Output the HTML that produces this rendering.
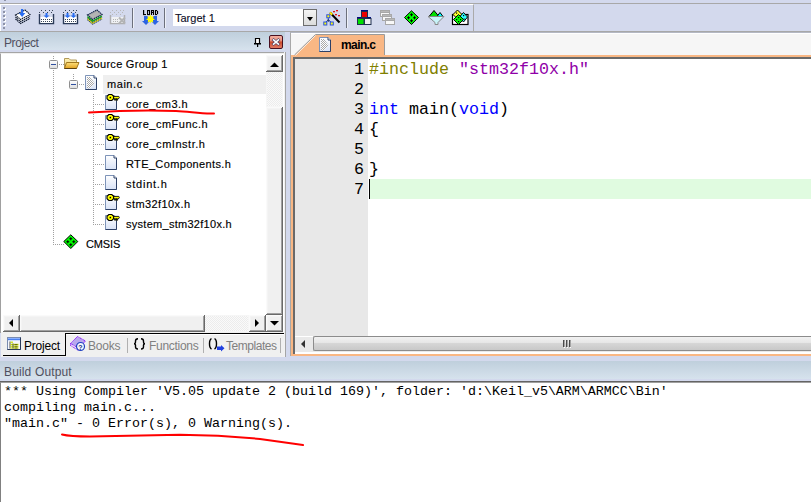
<!DOCTYPE html>
<html><head><meta charset="utf-8">
<style>
*{margin:0;padding:0;box-sizing:border-box}
html,body{width:811px;height:502px;overflow:hidden;background:#d3d9ed;font-family:"Liberation Sans",sans-serif}
body{position:relative}
.a{position:absolute}
.ui{font-family:"Liberation Sans",sans-serif;font-size:11px;white-space:nowrap;color:#000;line-height:13px}
.btn{background:#f0f0f0;box-shadow:inset -1px -1px #696969,inset 1px 1px #fafafa,inset -2px -2px #a0a0a0,inset 2px 2px #f4f4f4}
.mono{font-family:"Liberation Mono",monospace;white-space:pre}
.tr{position:absolute;margin-top:1px;-webkit-text-stroke:0.15px #000;font-family:"Liberation Sans",sans-serif;font-size:11px;letter-spacing:0.25px;white-space:nowrap;color:#000;line-height:13px}
.ln{position:absolute;left:295px;width:69px;text-align:right;font-family:"Liberation Mono",monospace;font-size:16.67px;line-height:20px;color:#000}
.cd{position:absolute;left:369px;font-family:"Liberation Mono",monospace;font-size:16.67px;line-height:20px;white-space:pre;color:#000}
.out{position:absolute;left:4px;font-family:"Liberation Mono",monospace;font-size:13.33px;line-height:16px;white-space:pre;color:#000}
</style></head><body>

<!-- ===== top strip + toolbar ===== -->
<div class="a" style="left:0;top:3px;width:811px;height:1px;background:#a8a8a8"></div>
<div class="a" style="left:0;top:4px;width:474px;height:27px;background:#d3d9ed;border-top:1px solid #fff;border-left:1px solid #fff;border-right:1px solid #aaa"></div>
<div class="a" style="left:0;top:31px;width:811px;height:1px;background:#a8a8a8"></div>
<!-- combo -->
<div class="a" style="left:173px;top:9px;width:131px;height:17px;background:#fff"></div>
<div class="a ui" style="left:175px;top:12px;font-size:11px;line-height:13px;color:#101030;-webkit-text-stroke:0.12px #000">Target 1</div>
<div class="a" style="left:303px;top:9px;width:14px;height:17px;border:1px solid #6e6e6e;background:linear-gradient(#f4f4f4,#dcdcdc)"></div>

<!-- ===== PROJECT PANEL ===== -->
<div class="a" style="left:0;top:32px;width:285px;height:18px;background:linear-gradient(#bfcfdc,#d6e2ed)"></div>
<div class="a ui" style="left:4px;top:36px;font-size:12px;line-height:14px;color:#50505e;letter-spacing:-0.4px">Project</div>
<svg class="a" style="left:250px;top:32px" width="36" height="20">
  <path d="M5.5,6.5 H9.5 V11.5 H5.5 Z" fill="#fff" stroke="#000" stroke-width="1.2"/>
  <rect x="4" y="11" width="7" height="1.5" fill="#000"/>
  <rect x="7" y="12" width="1.2" height="3" fill="#000"/>
</svg>
<div class="a" style="left:269px;top:35px;width:14px;height:14px;border:1px solid #4a1020;border-radius:2px;background:linear-gradient(#f4b0a0 0%,#e89080 40%,#cc4a2c 50%,#e07a64 100%)"></div>
<svg class="a" style="left:269px;top:35px" width="14" height="14">
  <path d="M3.6,4.1 L10.4,9.9 M10.4,4.1 L3.6,9.9" stroke="#4a4060" stroke-width="2.8" stroke-linecap="butt"/>
  <path d="M4,4.4 L10,9.6 M10,4.4 L4,9.6" stroke="#fff" stroke-width="1.6" stroke-linecap="butt"/>
</svg>
<div class="a" style="left:0;top:52px;width:286px;height:1px;background:#a5a5a5"></div>
<div class="a" style="left:0;top:53px;width:284px;height:280px;background:#fff;border-left:1px solid #a0a0a0;border-top:1px solid #f0f0f0"></div>
<div class="a" style="left:284px;top:52px;width:2px;height:305px;background:#f2f2f2;border-right:1px solid #a5a5a5"></div>

<!-- highlight main.c -->
<div class="a" style="left:103px;top:75px;width:163px;height:19px;background:#efefef"></div>

<!-- tree text -->
<div class="tr" style="left:86px;top:57px;letter-spacing:0.28px">Source Group 1</div>
<div class="tr" style="left:107px;top:77px;letter-spacing:0.55px">main.c</div>
<div class="tr" style="left:126px;top:97px;letter-spacing:0.47px">core_cm3.h</div>
<div class="tr" style="left:126px;top:117px;letter-spacing:0.49px">core_cmFunc.h</div>
<div class="tr" style="left:126px;top:137px;letter-spacing:0.52px">core_cmInstr.h</div>
<div class="tr" style="left:126px;top:157px;letter-spacing:0.36px">RTE_Components.h</div>
<div class="tr" style="left:126px;top:177px;letter-spacing:0.76px">stdint.h</div>
<div class="tr" style="left:126px;top:197px;letter-spacing:0.42px">stm32f10x.h</div>
<div class="tr" style="left:126px;top:217px;letter-spacing:0.28px">system_stm32f10x.h</div>
<div class="tr" style="left:86px;top:237px;letter-spacing:-0.12px">CMSIS</div>

<!-- tree v-scrollbar -->
<div class="a" style="left:266px;top:55px;width:17px;height:260px;background:#f6f6f6"></div>
<div class="a btn" style="left:266px;top:55px;width:17px;height:17px"></div>
<div class="a btn" style="left:266px;top:107px;width:17px;height:208px"></div>
<!-- tree h-scrollbar -->
<div class="a" style="left:3px;top:315px;width:263px;height:17px;background:#f6f6f6"></div>
<div class="a btn" style="left:3px;top:315px;width:17px;height:17px"></div>
<div class="a btn" style="left:20px;top:315px;width:185px;height:17px"></div>
<div class="a btn" style="left:249px;top:315px;width:17px;height:17px"></div>
<div class="a btn" style="left:266px;top:315px;width:17px;height:17px"></div>

<!-- tabs strip -->
<div class="a" style="left:1px;top:332px;width:283px;height:25px;background:#f0f0f0"></div>
<div class="a" style="left:65px;top:333px;width:219px;height:1px;background:#000"></div>
<div class="a" style="left:66px;top:334px;width:218px;height:1px;background:#fff"></div>
<div class="a" style="left:65px;top:333px;width:1px;height:23px;background:#000"></div>
<div class="a" style="left:3px;top:355px;width:63px;height:1px;background:#000"></div>
<div class="a ui" style="left:24px;top:339px;font-size:12px;line-height:14px;letter-spacing:-0.2px;color:#000">Project</div>
<div class="a ui" style="left:88px;top:339px;font-size:12px;line-height:14px;letter-spacing:-0.2px;color:#808080">Books</div>
<div class="a" style="left:127px;top:338px;width:1px;height:15px;background:#b0b0b0"></div>
<div class="a ui" style="left:149px;top:339px;font-size:12px;line-height:14px;letter-spacing:-0.3px;color:#808080">Functions</div>
<div class="a" style="left:203px;top:338px;width:1px;height:15px;background:#b0b0b0"></div>
<div class="a ui" style="left:226px;top:339px;font-size:12px;line-height:14px;letter-spacing:-0.45px;color:#808080">Templates</div>
<div class="a" style="left:280px;top:338px;width:1px;height:15px;background:#b0b0b0"></div>

<!-- ===== EDITOR ===== -->
<div class="a" style="left:290px;top:32px;width:521px;height:324px;background:#f6f6f6;border-left:1px solid #a8a8a8;border-top:1px solid #b4b8c4"></div>
<div class="a" style="left:291px;top:33px;width:520px;height:1px;background:#fff"></div>
<!-- editor frame orange -->
<div class="a" style="left:291px;top:55px;width:520px;height:301px;background:#f9b784"></div>
<div class="a" style="left:293px;top:57px;width:518px;height:297px;background:#fff;border-top:2px solid #6a6a6a;border-left:2px solid #6a6a6a"></div>
<!-- gutter -->
<div class="a" style="left:295px;top:59px;width:73px;height:277px;background:#e8e8e8"></div>
<!-- current line -->
<div class="a" style="left:369px;top:179px;width:442px;height:20px;background:#e0fbe0"></div>
<div class="a" style="left:369px;top:179px;width:1px;height:20px;background:#000"></div>
<!-- tab -->
<svg class="a" style="left:290px;top:32px" width="110" height="26">
  <polygon points="4.5,23.5 25,3 94,3 94,23.5" fill="#f9b784"/>
  <polyline points="4.5,23 25.5,2.5 94.5,2.5 94.5,23" fill="none" stroke="#9a9a9a" stroke-width="1"/>
  <polyline points="5.5,23.5 25.5,3.5" fill="none" stroke="#fff" stroke-width="1" opacity="0.7"/>
</svg>
<div class="a ui" style="left:341px;top:38px;font-size:12px;line-height:14px;font-weight:bold;color:#000;letter-spacing:-0.6px">main.c</div>

<!-- line numbers -->
<div class="ln" style="top:60px">1</div>
<div class="ln" style="top:80px">2</div>
<div class="ln" style="top:100px">3</div>
<div class="ln" style="top:120px">4</div>
<div class="ln" style="top:140px">5</div>
<div class="ln" style="top:160px">6</div>
<div class="ln" style="top:180px">7</div>
<!-- code -->
<div class="cd" style="top:60px"><span style="color:#808000">#include</span> <span style="color:#9000a8">"stm32f10x.h"</span></div>
<div class="cd" style="top:100px"><span style="color:#0000ff">int</span> main(<span style="color:#0000ff">void</span>)</div>
<div class="cd" style="top:120px">{</div>
<div class="cd" style="top:160px">}</div>

<!-- editor h-scrollbar -->
<div class="a" style="left:295px;top:336px;width:516px;height:16px;background:#e9e9e9;border-top:1px solid #fff"></div>
<div class="a" style="left:313px;top:336px;width:498px;height:15px;border:1px solid #8c8c8c;border-right:none;border-radius:2px 0 0 2px;background:linear-gradient(#f2f2f2 0%,#e6e6e6 45%,#d6d6d6 50%,#c8c8c8 100%)"></div>

<!-- ===== BUILD OUTPUT ===== -->
<div class="a" style="left:0;top:361px;width:811px;height:18px;background:linear-gradient(#bfcfdc,#d6e2ed)"></div>
<div class="a ui" style="left:4px;top:365px;font-size:12px;line-height:14px;color:#50505e;letter-spacing:0.15px">Build Output</div>
<div class="a" style="left:0;top:381px;width:811px;height:1px;background:#646464"></div>
<div class="a" style="left:0;top:382px;width:811px;height:120px;background:#fff;border-left:1px solid #808080;border-top:1px solid #a0a0a0"></div>
<div class="out" style="top:384px">*** Using Compiler 'V5.05 update 2 (build 169)', folder: 'd:\Keil_v5\ARM\ARMCC\Bin'</div>
<div class="out" style="top:400px">compiling main.c...</div>
<div class="out" style="top:416px">"main.c" - 0 Error(s), 0 Warning(s).</div>

<!-- ===== SVG overlay ===== -->
<svg class="a" style="left:0;top:0" width="811" height="502" shape-rendering="auto">
<defs>
  <linearGradient id="docg" x1="0" y1="0" x2="0" y2="1"><stop offset="0" stop-color="#ffffff"/><stop offset="1" stop-color="#d8e2f6"/></linearGradient>
  <linearGradient id="boxg" x1="0" y1="0" x2="0" y2="1"><stop offset="0" stop-color="#ffffff"/><stop offset="1" stop-color="#dcdcdc"/></linearGradient>
  <linearGradient id="fold1" x1="0" y1="0" x2="0" y2="1"><stop offset="0" stop-color="#fff3b8"/><stop offset="1" stop-color="#e9c460"/></linearGradient>
  <linearGradient id="fold2" x1="0" y1="0" x2="0" y2="1"><stop offset="0" stop-color="#ffe07a"/><stop offset="1" stop-color="#e0a020"/></linearGradient>
  <pattern id="dith" width="2" height="2" patternUnits="userSpaceOnUse"><rect width="2" height="2" fill="#fff"/><rect width="1" height="1" fill="#a8a8a8"/><rect x="1" y="1" width="1" height="1" fill="#a8a8a8"/></pattern>
  <pattern id="trk" width="2" height="2" patternUnits="userSpaceOnUse"><rect width="2" height="2" fill="#fafafa"/><rect width="1" height="1" fill="#ececec"/><rect x="1" y="1" width="1" height="1" fill="#ececec"/></pattern>
  <g id="doc">
    <path d="M0.5,0.5 H9 L11.5,3 V14.5 H0.5 Z" fill="url(#docg)" stroke="#7d93b8" stroke-width="1"/>
    <path d="M11.5,3 V14.5 H0.5" fill="none" stroke="#2d4066" stroke-width="1"/>
    <path d="M9,0.5 V3 H11.5" fill="#fff" stroke="#2d4066" stroke-width="1"/>
  </g>
  <g id="key">
    <path d="M7.3,2.2 H12.8 L13.3,3.2 L12.8,4.4 H11.6 V6 H10.6 V4.4 H9.6 V6 H8.6 V4.4 H7.3 Z" fill="#ffff00" stroke="#000" stroke-width="0.9" stroke-linejoin="round"/>
    <path d="M2.8,0.3 H5.8 L7.6,2.1 V4.5 L5.8,6.3 H2.8 L1,4.5 V2.1 Z" fill="#ffff00" stroke="#000" stroke-width="1.1"/>
    <rect x="3.6" y="2.6" width="1.5" height="1.5" fill="#000"/>
  </g>
  <g id="minus">
    <rect x="0.5" y="0.5" width="8" height="8" rx="1" fill="url(#boxg)" stroke="#8f8f8f"/>
    <rect x="2" y="4" width="5" height="1" fill="#3050a0"/>
  </g>
  <g id="gdiam">
    <path d="M7,0.3 L14,7 L7,14 L0,7 Z" fill="#00ff00" stroke="#000" stroke-width="1"/>
    <path d="M6.5,2.8 H7.5 V3.8 H8.5 V4.8 H7.5 V5.8 H6.5 V4.8 H5.5 V3.8 H6.5 Z M3.5,5.8 H4.5 V6.8 H5.5 V7.8 H4.5 V8.8 H3.5 V7.8 H2.5 V6.8 H3.5 Z M9.5,5.8 H10.5 V6.8 H11.5 V7.8 H10.5 V8.8 H9.5 V7.8 H8.5 V6.8 H9.5 Z M6.5,8.8 H7.5 V9.8 H8.5 V10.8 H7.5 V11.8 H6.5 V10.8 H5.5 V9.8 H6.5 Z" fill="#000"/>
  </g>
</defs>
<!-- tree dotted lines -->
<g stroke="#a0a0a0" stroke-width="1" stroke-dasharray="1,1" fill="none">
  <line x1="53.5" y1="56" x2="53.5" y2="59"/>
  <line x1="53.5" y1="70" x2="53.5" y2="245"/>
  <line x1="59" y1="64.5" x2="64" y2="64.5"/>
  <line x1="73.5" y1="74" x2="73.5" y2="79"/>
  <line x1="79" y1="84.5" x2="85" y2="84.5"/>
  <line x1="93.5" y1="94" x2="93.5" y2="225"/>
  <line x1="95" y1="104.5" x2="105" y2="104.5"/>
  <line x1="95" y1="124.5" x2="105" y2="124.5"/>
  <line x1="95" y1="144.5" x2="105" y2="144.5"/>
  <line x1="95" y1="164.5" x2="105" y2="164.5"/>
  <line x1="95" y1="184.5" x2="105" y2="184.5"/>
  <line x1="95" y1="204.5" x2="105" y2="204.5"/>
  <line x1="95" y1="224.5" x2="105" y2="224.5"/>
  <line x1="55" y1="244.5" x2="64" y2="244.5"/>
</g>
<use href="#minus" x="49" y="60"/>
<use href="#minus" x="69" y="80"/>
<!-- folder -->
<g transform="translate(64,57)">
  <path d="M0.5,1.5 H5 L6.5,3 H12.5 V11.5 H0.5 Z" fill="url(#fold1)" stroke="#b29a5a" stroke-width="1"/>
  <path d="M2.5,5.5 H15 L12.5,11.5 H0.5 Z" fill="url(#fold2)" stroke="#a07820" stroke-width="1"/>
  <path d="M0.5,11.5 H12.5" stroke="#5a4010" stroke-width="1"/>
</g>
<!-- main.c doc -->
<g transform="translate(85,75)">
  <use href="#doc"/>
  <path d="M2,2 H5 L9.5,8 L5,13.5 H2 Z" fill="url(#dith)"/>
</g>
<!-- child docs -->
<use href="#doc" x="105" y="95"/><use href="#key" x="106" y="94.2"/>
<use href="#doc" x="105" y="115"/><use href="#key" x="106" y="114.2"/>
<use href="#doc" x="105" y="135"/><use href="#key" x="106" y="134.2"/>
<use href="#doc" x="105" y="155"/>
<use href="#doc" x="105" y="175"/>
<use href="#doc" x="105" y="195"/><use href="#key" x="106" y="194.2"/>
<use href="#doc" x="105" y="215"/><use href="#key" x="106" y="214.2"/>
<use href="#gdiam" x="63.8" y="234.5"/>

<!-- scrollbar arrows (tree) -->
<path d="M270,67 L274.5,62.5 L279,67 Z" fill="#000"/>
<path d="M13,319 L9,323 L13,327 Z" fill="#000"/>
<path d="M255,319 L259,323 L255,327 Z" fill="#000"/>
<path d="M270,321 L274.5,325.5 L279,321 Z" fill="#000"/>
<rect x="267" y="72" width="15" height="34" fill="url(#trk)"/>
<rect x="205" y="316" width="43" height="15" fill="url(#trk)"/>

<!-- editor tab doc icon -->
<g transform="translate(319,37)">
  <use href="#doc"/>
  <path d="M2,2 H5 L9.5,8 L5,13.5 H2 Z" fill="url(#dith)"/>
</g>
<!-- editor h-scroll left arrow + grip -->
<path d="M305,340 L301,344 L305,348 Z" fill="#333"/>
<g fill="#fff"><rect x="564" y="341" width="1" height="7"/><rect x="567" y="341" width="1" height="7"/><rect x="570" y="341" width="1" height="7"/></g><g fill="#4a4a4a"><rect x="563" y="340" width="1.5" height="7"/><rect x="566" y="340" width="1.5" height="7"/><rect x="569" y="340" width="1.5" height="7"/></g>

<!-- combo arrow -->
<path d="M307,17 L313,17 L310,21 Z" fill="#000"/>

<!-- ===== toolbar icons ===== -->
<!-- grip dots -->
<g fill="#fff"><rect x="4" y="8" width="2" height="2"/><rect x="4" y="12" width="2" height="2"/><rect x="4" y="16" width="2" height="2"/><rect x="4" y="20" width="2" height="2"/><rect x="4" y="24" width="2" height="2"/><rect x="4" y="28" width="1" height="1"/></g>
<g fill="#8c92a8"><rect x="3" y="7" width="2" height="2"/><rect x="3" y="11" width="2" height="2"/><rect x="3" y="15" width="2" height="2"/><rect x="3" y="19" width="2" height="2"/><rect x="3" y="23" width="2" height="2"/><rect x="3" y="27" width="2" height="2"/><rect x="4" y="0" width="2" height="1"/></g>
<!-- icon1: stack + arrow -->
<g transform="translate(15,9)" stroke="#0a1428" stroke-width="1.1" stroke-dasharray="1.5,0.6">
  <path d="M0.5,10 L5.5,14.5 L15,9.5" fill="none"/>
  <path d="M0.5,8 L5.5,12.5 L15,7.5" fill="#fff"/>
  <path d="M0.5,6 L10,1 L15,5.5 L5.5,10.5 Z" fill="#fff"/>
</g>
<g transform="translate(15,9)">
  <rect x="6" y="0" width="2.2" height="4.5" fill="#2a6ef0"/>
  <path d="M3.8,4 L10.4,4 L7.1,8 Z" fill="#2a6ef0"/>
</g>
<!-- icon2: build -->
<g transform="translate(39,9)">
  <g fill="#3a4658"><rect x="2" y="1" width="1" height="1"/><rect x="6" y="1" width="1" height="1"/><rect x="10" y="1" width="1" height="1"/><rect x="13" y="1" width="1" height="1"/><rect x="0" y="3" width="1" height="1"/><rect x="4" y="3" width="1" height="1"/><rect x="8" y="3" width="1" height="1"/><rect x="12" y="3" width="1" height="1"/></g>
  <path d="M0.5,5 V14.5 H14.5 V5" fill="none" stroke="#2a3a58" stroke-width="1.4"/>
  <rect x="1.5" y="8" width="12" height="6" fill="#fff"/>
  <g fill="#3a4658"><rect x="2" y="10" width="1" height="1"/><rect x="4" y="10" width="1" height="1"/><rect x="6" y="10" width="1" height="1"/><rect x="8" y="10" width="1" height="1"/><rect x="10" y="10" width="1" height="1"/><rect x="12" y="10" width="1" height="1"/><rect x="2" y="12" width="1" height="1"/><rect x="4" y="12" width="1" height="1"/><rect x="6" y="12" width="1" height="1"/><rect x="8" y="12" width="1" height="1"/><rect x="10" y="12" width="1" height="1"/><rect x="12" y="12" width="1" height="1"/></g>
  <rect x="6.5" y="4" width="2" height="3" fill="#2a6ef0"/><path d="M4.5,6.5 L10.5,6.5 L7.5,9 Z" fill="#2a6ef0"/>
</g>
<!-- icon3: rebuild -->
<g transform="translate(63,9)">
  <g fill="#3a4658"><rect x="2" y="1" width="1" height="1"/><rect x="6" y="1" width="1" height="1"/><rect x="10" y="1" width="1" height="1"/><rect x="13" y="1" width="1" height="1"/><rect x="0" y="3" width="1" height="1"/><rect x="4" y="3" width="1" height="1"/><rect x="8" y="3" width="1" height="1"/><rect x="12" y="3" width="1" height="1"/></g>
  <path d="M0.5,5 V14.5 H14.5 V5" fill="none" stroke="#2a3a58" stroke-width="1.4"/>
  <rect x="1.5" y="8" width="12" height="6" fill="#fff"/>
  <g fill="#3a4658"><rect x="2" y="10" width="1" height="1"/><rect x="4" y="10" width="1" height="1"/><rect x="6" y="10" width="1" height="1"/><rect x="8" y="10" width="1" height="1"/><rect x="10" y="10" width="1" height="1"/><rect x="12" y="10" width="1" height="1"/><rect x="2" y="12" width="1" height="1"/><rect x="4" y="12" width="1" height="1"/><rect x="6" y="12" width="1" height="1"/><rect x="8" y="12" width="1" height="1"/><rect x="10" y="12" width="1" height="1"/><rect x="12" y="12" width="1" height="1"/></g>
  <rect x="3.5" y="4" width="2" height="3" fill="#2a6ef0"/><path d="M1.5,6.5 L7.5,6.5 L4.5,9 Z" fill="#2a6ef0"/>
  <rect x="9.5" y="4" width="2" height="3" fill="#2a6ef0"/><path d="M7.5,6.5 L13.5,6.5 L10.5,9 Z" fill="#2a6ef0"/>
</g>
<!-- icon4: batch -->
<g transform="translate(87,9)" stroke-width="1.2">
  <path d="M0.5,10.5 L5.5,15 L15,10" fill="none" stroke="#1a2a50" stroke-dasharray="1.5,0.6"/>
  <path d="M0.5,9.5 L5.5,14 L15,9" fill="none" stroke="#e8e800"/>
  <path d="M0.5,8.5 L5.5,13 L15,8" fill="none" stroke="#1a2a50" stroke-dasharray="1.5,0.6"/>
  <path d="M0.5,7.5 L5.5,12 L15,7" fill="none" stroke="#10b010"/>
  <path d="M0.5,6 L10,1 L15,5.5 L5.5,10.5 Z" fill="#b4b4b4" stroke="#1a2a50" stroke-dasharray="1.5,0.6"/>
</g>
<!-- icon5: stop build disabled -->
<g transform="translate(110,9)" opacity="0.9">
  <g fill="#b4b4b4"><rect x="2" y="1" width="1" height="1"/><rect x="6" y="1" width="1" height="1"/><rect x="10" y="1" width="1" height="1"/><rect x="13" y="1" width="1" height="1"/><rect x="0" y="3" width="1" height="1"/><rect x="4" y="3" width="1" height="1"/><rect x="8" y="3" width="1" height="1"/><rect x="12" y="3" width="1" height="1"/><rect x="2" y="5" width="1" height="1"/><rect x="6" y="5" width="1" height="1"/><rect x="10" y="5" width="1" height="1"/></g>
  <path d="M0.5,6 V14.5 H14.5 V6" fill="none" stroke="#aaa" stroke-width="1.4"/>
  <rect x="1.5" y="8" width="12" height="6" fill="#f4f4f4"/>
  <g fill="#b0b0b0"><rect x="3" y="10" width="1" height="1"/><rect x="5" y="10" width="1" height="1"/><rect x="7" y="10" width="1" height="1"/><rect x="3" y="12" width="1" height="1"/><rect x="5" y="12" width="1" height="1"/><rect x="7" y="12" width="1" height="1"/></g>
  <path d="M9,8.5 L15,14.5 M15,8.5 L9,14.5" stroke="#b0b0b0" stroke-width="2"/>
</g>
<!-- separators -->
<rect x="132" y="8" width="1" height="20" fill="#6c707c"/><rect x="133" y="8" width="1" height="20" fill="#fff" opacity="0.6"/>
<rect x="164" y="8" width="1" height="20" fill="#6c707c"/><rect x="165" y="8" width="1" height="20" fill="#fff" opacity="0.6"/>
<rect x="346" y="8" width="1" height="20" fill="#6c707c"/><rect x="347" y="8" width="1" height="20" fill="#fff" opacity="0.6"/>
<!-- LOAD -->
<g fill="#000">
  <rect x="143" y="10" width="1.2" height="5"/><rect x="143" y="14" width="3" height="1.1"/>
  <rect x="147" y="10" width="3" height="1.1"/><rect x="147" y="14" width="3" height="1.1"/><rect x="147" y="10" width="1.1" height="5"/><rect x="149" y="10" width="1.1" height="5"/>
  <rect x="151" y="10" width="3" height="1.1"/><rect x="151" y="10" width="1.1" height="5"/><rect x="153" y="10" width="1.1" height="5"/><rect x="151" y="12" width="3" height="1"/>
  <rect x="155" y="10" width="2.2" height="1.1"/><rect x="155" y="14" width="2.2" height="1.1"/><rect x="155" y="10" width="1.1" height="5"/><rect x="157" y="11" width="1.1" height="3"/>
</g>
<path d="M144,16 H148 V21 H150 L146,25 L142,21 H144 Z" fill="#2c64e4"/>
<path d="M153,16 H157 V21 H159 L155,25 L151,21 H153 Z" fill="#2c64e4"/>
<path d="M150.5,14.5 L151.5,16.8 L153.8,16 L153,18.3 L155,19.5 L152.8,20.3 L153.3,22.6 L151.2,21.4 L150.5,23.5 L149.8,21.4 L147.7,22.6 L148.2,20.3 L146,19.5 L148,18.3 L147.2,16 L149.5,16.8 Z" fill="#ffff00"/>
<!-- wizard -->
<path d="M330,12.5 L339.5,22.5" stroke="#000" stroke-width="2"/>
<path d="M330,12.5 L332.2,14.8" stroke="#ffe800" stroke-width="2"/>
<g fill="#e01818"><rect x="333" y="11" width="2" height="1.3"/><rect x="336" y="10" width="2" height="1.3"/><rect x="335" y="14" width="2" height="1.3"/><rect x="338" y="15" width="2" height="1.3"/></g>
<path d="M328.3,17.5 V20 L325.3,22.5 M328.3,20 L331.6,22.5" stroke="#2a50c0" stroke-width="1" fill="none"/>
<rect x="326.8" y="14.8" width="3" height="3" fill="#ff0" stroke="#2a50e0" stroke-width="1"/>
<rect x="323.8" y="22" width="3" height="3" fill="#ff0" stroke="#2a50e0" stroke-width="1"/>
<rect x="330.3" y="22" width="3" height="3" fill="#ff0" stroke="#2a50e0" stroke-width="1"/>
<path d="M328.3,19 L329.8,20.5 L328.3,22 L326.8,20.5 Z" fill="#304070"/>
<!-- icon A: blocks -->
<g transform="translate(357,10)">
  <rect x="4" y="0" width="7" height="1.5" fill="#000a80"/>
  <rect x="4.5" y="1.5" width="6" height="6" fill="#ee0000" stroke="#203050"/>
  <rect x="0" y="7" width="4" height="1.5" fill="#000a80"/><rect x="10" y="7" width="4" height="1.5" fill="#000a80"/>
  <rect x="0.5" y="8.5" width="6.5" height="6" fill="#00e000" stroke="#203050"/>
  <rect x="7.5" y="8.5" width="6.5" height="6" fill="#f0f0f0" stroke="#203050"/>
</g>
<!-- icon B: windows -->
<g transform="translate(380,10)" fill="#f8f8f8" stroke="#a8a8a8">
  <rect x="0.5" y="0.5" width="9" height="6"/><rect x="0.5" y="0.5" width="9" height="2" fill="#b8b8b8"/>
  <rect x="2.5" y="4.5" width="9" height="6"/><rect x="2.5" y="4.5" width="9" height="2" fill="#b8b8b8"/>
  <rect x="5.5" y="8.5" width="9" height="6"/><rect x="5.5" y="8.5" width="9" height="2" fill="#b8b8b8"/>
</g>
<!-- icon C -->
<use href="#gdiam" x="404.5" y="10.5"/>
<!-- icon D funnel -->
<g transform="translate(428,10)">
  <path d="M1,6.5 L6,0.5 L11,6.5 Z" fill="#00e000" stroke="#000"/>
  <path d="M9,6.5 L12,2.5 L15,6.5 Z" fill="#00ffff" stroke="#000"/>
  <path d="M0,6.5 H16 L10,12.5 V14.5 H7 V12.5 Z" fill="#c8f4fa" stroke="#888"/>
</g>
<!-- icon E -->
<g>
  <rect x="452.5" y="14.5" width="15.5" height="10" fill="#fff" stroke="#000" stroke-width="1.2"/>
  <path d="M457.5,10 L462,14.5 L457.5,19 L453,14.5 Z" fill="#ffff30" stroke="#000"/>
  <path d="M463.5,12.5 L467.5,17 L463.5,22 L459.5,17 Z" fill="#30ffff" stroke="#000"/>
  <path d="M458.5,14.5 L463.5,19.5 L458.5,24.5 L453.5,19.5 Z" fill="#00ff00" stroke="#000"/>
  <g fill="#000"><rect x="458" y="17" width="1.2" height="1.2"/><rect x="456" y="19" width="1.2" height="1.2"/><rect x="460" y="19" width="1.2" height="1.2"/><rect x="458" y="21" width="1.2" height="1.2"/>
  <rect x="463" y="15" width="1.2" height="1.2"/><rect x="463.5" y="18.5" width="1.2" height="1.2"/><rect x="456" y="12.5" width="1.2" height="1.2"/></g>
</g>

<!-- tab icons -->
<g transform="translate(7,337)">
  <rect x="0.5" y="0.5" width="13" height="12" fill="#f4f6fc" stroke="#7a8cb0"/>
  <path d="M13.5,0.5 V12.5 H0.5" fill="none" stroke="#2a3a5a"/>
  <rect x="1" y="1" width="12" height="2.2" fill="#4a80ee"/>
  <rect x="1" y="1" width="12" height="1" fill="#8ab0ff"/>
  <rect x="2.5" y="4.5" width="1" height="7" fill="#505050"/>
  <rect x="3.5" y="4.6" width="2.5" height="1.2" fill="#c8e000"/>
  <rect x="3.5" y="6.8" width="8" height="1.2" fill="#c8e000"/><rect x="3.5" y="8.6" width="8" height="1.2" fill="#c8e000"/><rect x="3.5" y="10.4" width="8" height="1.2" fill="#c8e000"/>
  <rect x="5.5" y="6.5" width="1" height="5" fill="#505050"/>
  <rect x="7.5" y="7" width="3" height="0.8" fill="#505000"/><rect x="7.5" y="8.8" width="3" height="0.8" fill="#505000"/><rect x="7.5" y="10.6" width="3" height="0.8" fill="#505000"/>
</g>
<g transform="translate(70,336)">
  <path d="M0.5,7.5 L7.5,0.5 L15.5,5 L8.5,12 Z" fill="#b9a8ee" stroke="#8000ff" stroke-dasharray="1,0.6"/>
  <path d="M0.5,7.5 V9.5 L8.5,14.5" fill="none" stroke="#8000ff" stroke-dasharray="1,0.6"/>
  <circle cx="10.5" cy="10.5" r="4" fill="#f4f8ff" stroke="#2040c0" stroke-width="1.2"/>
  <text x="8.3" y="13.5" font-family="Liberation Sans" font-size="7" font-weight="bold" fill="#203080">?</text>
</g>
<g fill="none" stroke="#000" stroke-width="1.4">
  <path d="M138,338.7 Q135.5,338.7 135.5,341 V342.3 Q135.5,343.7 134,343.7 Q135.5,343.7 135.5,345.1 V346.8 Q135.5,349 138,349"/>
  <path d="M141,338.7 Q143.5,338.7 143.5,341 V342.3 Q143.5,343.7 145,343.7 Q143.5,343.7 143.5,345.1 V346.8 Q143.5,349 141,349"/>
  <path d="M211.5,338.7 Q209.5,339.5 209.5,343.7 Q209.5,348 211.5,349"/>
  <path d="M214.5,338.7 Q216.5,339.5 216.5,343.7 Q216.5,348 214.5,349"/>
</g>
<path d="M217,346.5 H221 V345 L224.5,348.3 L221,351.5 V350 H217 Z" fill="#2040e0"/>
<!-- red annotations -->
<path d="M89,112.5 C120,110.5 150,110 176,111 C190,111.5 200,114 214,113.5" fill="none" stroke="#f00" stroke-width="2" stroke-linecap="round"/>
<path d="M62,434.5 Q70,436.5 90,436.5 L180,434.7 Q220,435 260,439 L303,445" fill="none" stroke="#f00" stroke-width="2" stroke-linecap="round"/>
</svg>
</body></html>
